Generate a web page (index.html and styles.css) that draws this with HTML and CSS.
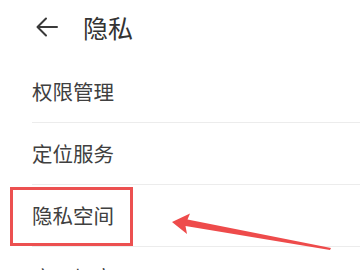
FILE: index.html
```html
<!DOCTYPE html>
<html lang="zh-CN">
<head>
<meta charset="utf-8">
<link rel="stylesheet" href="styles.css">
</head>
<body>
<div class="screen">
  <header class="topbar">
    <svg class="back" width="24" height="20" viewBox="0 0 24 20">
      <path d="M22 10H3M11 1.5L2.5 10L11 18.5" fill="none" stroke="#3a3a3a" stroke-width="2" stroke-linecap="round" stroke-linejoin="round"/>
    </svg>
    <h1 class="title">隐私</h1>
  </header>
  <ul class="list">
    <li class="row">权限管理</li>
    <li class="row">定位服务</li>
    <li class="row highlighted">隐私空间<span class="mark"></span></li>
    <li class="row">应用加密</li>
  </ul>
  <svg class="pointer" width="360" height="270" viewBox="0 0 360 270">
    <polygon points="172,222 190,213.5 187.5,219.5 331,248 330,250 185.5,226 187,234" fill="#ee4b4b"/>
  </svg>
</div>
</body>
</html>
```

FILE: styles.css
```css
html, body {
  margin: 0;
  padding: 0;
  background: #ffffff;
}
body {
  font-family: "Noto Sans CJK SC", "Noto Sans", sans-serif;
  color: #3a3a3a;
}
.screen {
  position: relative;
  width: 360px;
  height: 270px;
  overflow: hidden;
}
.topbar {
  height: 54px;
  display: flex;
  align-items: center;
  padding-left: 35px;
  gap: 24px;
}
.back {
  display: block;
}
.title {
  margin: 0;
  font-size: 25px;
  font-weight: 400;
  color: #333333;
  line-height: 1;
}
.list {
  list-style: none;
  margin: 0;
  padding: 7px 0 0 0;
}
.row {
  position: relative;
  margin-left: 32px;
  height: 61px;
  border-bottom: 1px solid #ececec;
  display: flex;
  align-items: center;
  font-size: 20.5px;
  color: #404040;
  line-height: 1;
}
.mark {
  position: absolute;
  left: -22px;
  top: 2px;
  width: 123px;
  height: 59px;
  box-sizing: border-box;
  border: 3px solid #ec5050;
}
.pointer {
  position: absolute;
  left: 0;
  top: 0;
}
```
